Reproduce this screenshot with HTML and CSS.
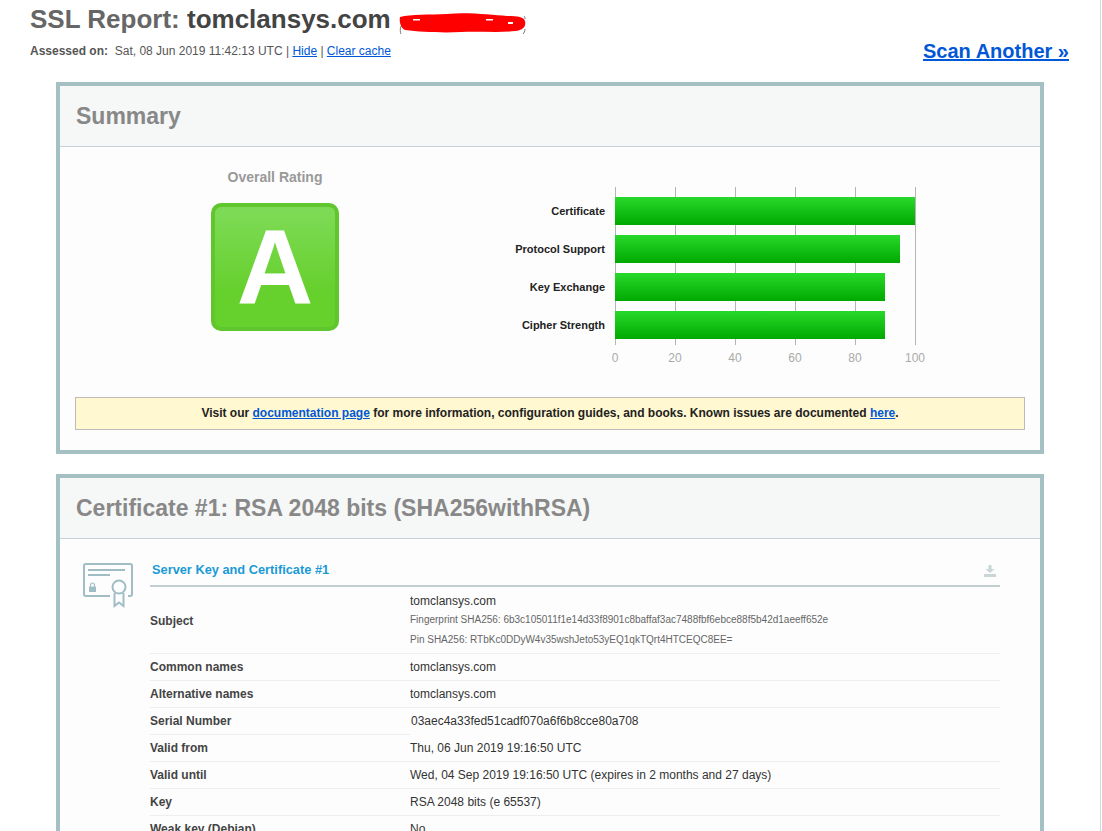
FILE: index.html
```html
<!DOCTYPE html>
<html lang="en">
<head>
    <meta charset="UTF-8">
    <meta name="viewport" content="width=device-width, initial-scale=1.0">
    <title>SSL Report: tomclansys.com</title>
    <link rel="stylesheet" href="styles.css">
</head>
<body>
    <div class="page">
        <div class="report-head">
            <div>
                <h1 class="report-title">
                    <span><span class="title-label">SSL Report:</span> tomclansys.com</span>
                    <svg class="scribble" width="128" height="22" viewBox="0 0 128 22">
                        <path fill="none" stroke="#777" stroke-width="1" d="M2 14 C1 17 1 20 2 22 M125 4 C126 5 126 6 126 7 M126 17 C126 19 125 21 124 22"/>
                        <path fill="#ff0000" d="M1 5 C12 2 30 3 48 2 C70 0 92 3 108 4 C118 4 125 5 126 9 C127 14 125 18 116 19 C100 21 80 19 62 20 C44 21 22 20 6 18 C2 16 0 10 1 5 Z"/>
                        <path fill="#ffffff" d="M14 7h7v1.500h-7z M87 7h7v1.500h-7z M109 10h5v2h-5z"/>
                    </svg>
                </h1>
                <div class="assessed"><b>Assessed on:</b>&nbsp; Sat, 08 Jun 2019 11:42:13 UTC | <a href="#">Hide</a> | <a href="#">Clear cache</a></div>
            </div>
            <a class="scan-link" href="#">Scan Another &raquo;</a>
        </div>

        <div class="box">
            <div class="box-head">Summary</div>
            <div class="summary">
                <div class="rating">
                    <div class="rating-label">Overall Rating</div>
                    <div class="grade">A</div>
                </div>
                <div class="chart">
                    <div class="chart-labels">
                        <div>Certificate</div>
                        <div>Protocol Support</div>
                        <div>Key Exchange</div>
                        <div>Cipher Strength</div>
                    </div>
                    <div>
                        <div class="plot">
                            <div class="bar" style="width: 100%"></div>
                            <div class="bar" style="width: 95%"></div>
                            <div class="bar" style="width: 90%"></div>
                            <div class="bar" style="width: 90%"></div>
                        </div>
                        <div class="ticks">
                            <span>0</span><span>20</span><span>40</span><span>60</span><span>80</span><span>100</span>
                        </div>
                    </div>
                </div>
            </div>
            <div class="notice">Visit our <a href="#">documentation page</a> for more information, configuration guides, and books. Known issues are documented <a href="#">here</a>.</div>
        </div>

        <div class="box">
            <div class="box-head">Certificate #1: RSA 2048 bits (SHA256withRSA)</div>
            <div class="cert">
                <svg class="cert-icon" width="50" height="45" viewBox="0 0 50 45" fill="none" stroke="#a0bdc6" stroke-width="2">
                    <path d="M27 33H3a2 2 0 0 1-2-2V3a2 2 0 0 1 2-2h44a2 2 0 0 1 2 2v28a2 2 0 0 1-2 2h-2"/>
                    <path d="M5 7h37M5 12h22"/>
                    <circle cx="36" cy="24" r="6.500"/>
                    <path d="M31.500 30v13l4.500-3.500 4.500 3.500V30"/>
                    <path fill="#a0bdc6" stroke="none" d="M6 23.500h7v5.500H6z"/>
                    <path d="M7.500 23.500v-1.500a2 2 0 0 1 4 0v1.500" stroke-width="1.200"/>
                </svg>
                <div class="cert-main">
                    <div class="section-title">
                        <span>Server Key and Certificate #1</span>
                        <svg width="12" height="12" viewBox="0 0 12 12" fill="#c9d6d8">
                            <path d="M4.500 0h3v4h3L6 8 1.500 4h3z"/>
                            <path d="M0 9h12v3H0z"/>
                        </svg>
                    </div>
                    <div class="cert-row subject">
                        <div class="cert-key">Subject</div>
                        <div class="cert-val">
                            tomclansys.com
                            <div class="fingerprint">Fingerprint SHA256: 6b3c105011f1e14d33f8901c8baffaf3ac7488fbf6ebce88f5b42d1aeeff652e</div>
                            <div class="fingerprint">Pin SHA256: RTbKc0DDyW4v35wshJeto53yEQ1qkTQrt4HTCEQC8EE=</div>
                        </div>
                    </div>
                    <div class="cert-row"><div class="cert-key">Common names</div><div class="cert-val">tomclansys.com</div></div>
                    <div class="cert-row"><div class="cert-key">Alternative names</div><div class="cert-val">tomclansys.com</div></div>
                    <div class="cert-row serial"><div class="cert-key">Serial Number</div><div class="cert-val">03aec4a33fed51cadf070a6f6b8cce80a708</div></div>
                    <div class="cert-row"><div class="cert-key">Valid from</div><div class="cert-val">Thu, 06 Jun 2019 19:16:50 UTC</div></div>
                    <div class="cert-row"><div class="cert-key">Valid until</div><div class="cert-val">Wed, 04 Sep 2019 19:16:50 UTC (expires in 2 months and 27 days)</div></div>
                    <div class="cert-row"><div class="cert-key">Key</div><div class="cert-val">RSA 2048 bits (e 65537)</div></div>
                    <div class="cert-row"><div class="cert-key">Weak key (Debian)</div><div class="cert-val">No</div></div>
                </div>
            </div>
        </div>
    </div>
</body>
</html>
```

FILE: styles.css
```css
html, body {
    height: 831px;
    overflow: hidden;
}
body {
    font-family: "Liberation Sans", Arial, sans-serif;
    font-size: 12px;
    color: #444;
    background-color: #fff;
    margin: 0;
    padding: 0;
}
a {
    color: #0057d8;
}
.page {
    width: 1100px;
    height: 831px;
    border-right: 1px solid #c5dde2;
    overflow: hidden;
}
.report-head {
    display: flex;
    justify-content: space-between;
    padding: 4px 31px 0 30px;
    height: 58px;
}
.report-title {
    display: flex;
    gap: 8px;
    font-size: 26px;
    line-height: 30px;
    margin: 0;
    color: #444;
}
.title-label {
    color: #666;
}
.scribble {
    align-self: flex-end;
}
.assessed {
    margin-top: 10px;
    line-height: 15px;
    color: #555;
}
.scan-link {
    align-self: flex-end;
    font-size: 20px;
    font-weight: bold;
    line-height: 24px;
    margin-bottom: -1px;
}
.box {
    width: 980px;
    margin: 20px 0 0 56px;
    border: 4px solid #a5c0c2;
    background-color: #fdfdfd;
}
.box-head {
    height: 60px;
    line-height: 60px;
    padding-left: 16px;
    font-size: 23px;
    font-weight: bold;
    color: #888;
    background-color: #f6f7f7;
    border-bottom: 1px solid #c5d2da;
}
.summary {
    display: flex;
    padding: 0 15px;
}
.rating {
    width: 400px;
    padding-top: 22px;
    text-align: center;
}
.rating-label {
    font-size: 14px;
    font-weight: bold;
    line-height: 16px;
    color: #999;
}
.grade {
    width: 120px;
    height: 120px;
    margin: 18px auto 0;
    border: 4px solid #5fc62d;
    border-radius: 10px;
    background: linear-gradient(#7fdb57, #66d02d 70%);
    color: #fff;
    font-size: 106px;
    font-weight: bold;
    line-height: 120px;
}
.chart {
    display: flex;
    padding-top: 40px;
}
.chart-labels {
    width: 130px;
    padding: 10px 10px 0 0;
    text-align: right;
    font-size: 11px;
    font-weight: bold;
    color: #222;
}
.chart-labels div {
    height: 28px;
    line-height: 28px;
    margin-bottom: 10px;
}
.plot {
    display: flex;
    flex-direction: column;
    gap: 10px;
    width: 300px;
    height: 148px;
    padding: 10px 1px 0 0;
    background-image: repeating-linear-gradient(90deg, #b5b5b5 0, #b5b5b5 1px, transparent 1px, transparent 60px);
}
.bar {
    height: 28px;
    background: linear-gradient(#28d92b, #00a900);
}
.ticks {
    display: flex;
    width: 360px;
    margin: 6px 0 0 -30px;
    font-size: 12px;
    line-height: 14px;
    color: #aaa;
}
.ticks span {
    width: 60px;
    text-align: center;
}
.notice {
    margin: 32px 15px 20px;
    height: 31px;
    line-height: 30px;
    text-align: center;
    font-weight: bold;
    color: #222;
    background-color: #fff8d0;
    border: 1px solid #bbb;
}
.cert {
    display: flex;
    padding: 24px 0 0 23px;
}
.cert-icon {
    flex-shrink: 0;
}
.cert-main {
    width: 850px;
    margin-left: 17px;
}
.section-title {
    display: flex;
    justify-content: space-between;
    align-items: center;
    height: 13px;
    padding: 0 2px 9px 2px;
    margin-bottom: 1px;
    font-size: 12.800px;
    font-weight: bold;
    color: #1b9ad6;
    border-bottom: 2px solid #c0d0d0;
}
.section-title svg {
    margin: 3px 2px 0 0;
}
.cert-row {
    display: flex;
    line-height: 26px;
}
.cert-key {
    width: 260px;
    font-weight: bold;
    color: #444;
    border-bottom: 1px solid #eee;
}
.cert-val {
    flex-grow: 1;
    color: #333;
    border-bottom: 1px solid #eee;
}
.subject .cert-key {
    display: flex;
    align-items: center;
}
.subject .cert-val {
    line-height: 18px;
    height: 61px;
    padding-top: 4px;
}
.fingerprint {
    font-size: 10px;
    line-height: 20px;
    color: #666;
}
.serial .cert-val {
    padding-left: 1px;
    border-bottom: none;
}
```
